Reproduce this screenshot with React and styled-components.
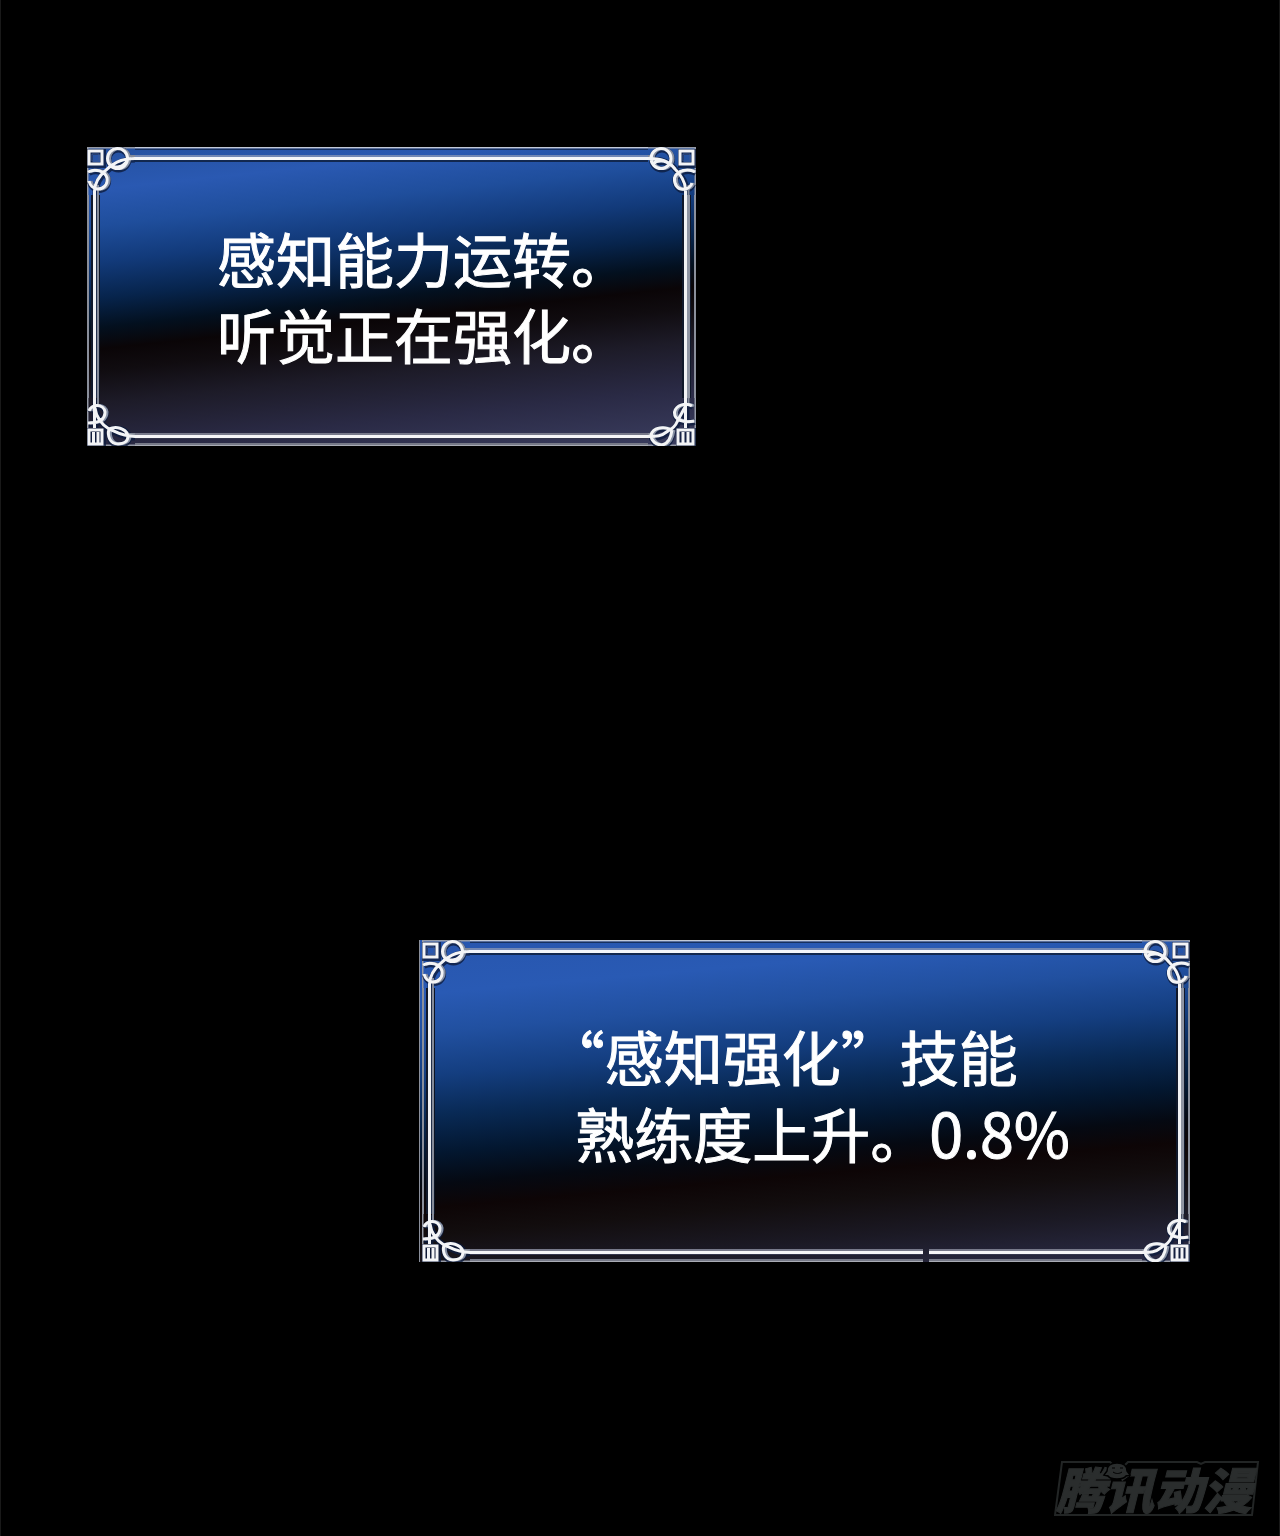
import React from "react";
import styled, { createGlobalStyle, css } from "styled-components";

const GlobalStyle = createGlobalStyle`
  *, *::before, *::after { box-sizing: border-box; }
  body { margin: 0; background: #000; }
`;

const Page = styled.main`
  display: flex;
  flex-direction: column;
  min-height: 100vh;
  padding: 147px 89px 0 86px;
  border: solid #191919;
  border-width: 0 1px;
  background: #000;
  color: #fff;
  font-family: "Noto Sans CJK SC", sans-serif;
`;

const tones = {
  dusk: css`
    background: linear-gradient(
      174deg,
      #24509f 0%, #2a59b2 12%, #1f4e9c 22%, #123a7a 32%, #07244c 42%,
      #03101f 50%, #0a0507 56%, #100c10 62%, #1d1b28 71%, #2a2a45 84%, #3b3e60 100%
    );
  `,
  night: css`
    background: linear-gradient(
      175deg,
      #2856ae 0%, #295ab4 14%, #2150a0 24%, #143e80 35%, #092a56 45%,
      #031730 55%, #050912 63%, #0d0506 69%, #120d0e 76%, #1b1924 86%, #2c2d49 100%
    );
  `,
};

const Panel = styled.section`
  display: grid;
  grid-template-columns: 48px 1fr 48px;
  grid-template-rows: 48px 1fr 48px;
  align-self: ${(p) => p.$side};
  ${(p) => tones[p.$tone]}
  ${(p) => p.$rimmed && css`
    padding-left: 2px;
    border-left: 1px solid #8a8f9b;
  `}
`;

const Message = styled.p`
  grid-area: 1 / 1 / -1 / -1;
  margin: 0;
  padding: ${(p) => p.$pad};
  font-family: "Liberation Sans", "Noto Sans CJK SC", sans-serif;
  font-size: 59px;
  line-height: 76px;
  font-weight: 400;
  white-space: nowrap;
  text-spacing-trim: trim-start;
  -webkit-text-stroke: 1px #fff;
`;

const Line = styled.span`
  display: block;
  height: 76px;
`;

const Quote = styled.span`
  font-family: "Noto Sans CJK SC", sans-serif;
`;

const Figure = styled.span`
  font-family: "Noto Sans CJK SC", sans-serif;
  font-size: 61px;
`;

const TopEdge = styled.div`
  grid-area: 1 / 2;
  height: 16px;
  background: linear-gradient(
    #c3cad8 0 1px, #5a6f9c 1px 2px, #16305f 2px 3px, transparent 3px 8px,
    #7388b4 8px 10px, #f4f6fa 10px 13px, #12284f 13px 15px, transparent 15px
  );
`;

const LeftEdge = styled.div`
  grid-area: 2 / 1;
  width: 15px;
  background: linear-gradient(
    90deg,
    #8a8f9b 0 2px, transparent 2px 4px, #10182a 4px 6px, #f2f3f5 6px 9px,
    #22304c 9px 10px, #858b99 10px 12px, #0c1424 12px 13px, transparent 13px
  );
`;

const RightEdge = styled.div`
  grid-area: 2 / 3;
  justify-self: end;
  width: 15px;
  background: linear-gradient(
    90deg,
    transparent 0 1px, #10182a 1px 3px, #f2f3f5 3px 6px, #8f95a3 6px 9px,
    #10182a 9px 10px, transparent 10px 13px, #8a8f9b 13px 15px
  );
`;

const BottomEdge = styled.div`
  grid-area: 3 / 2;
  align-self: end;
  display: flex;
  gap: 6px;
  height: 14px;
`;

const Rail = styled.div`
  flex: ${(p) => p.$grow};
  background: linear-gradient(
    transparent 0 1px, #77798a 1px 3px, #f6f6f8 3px 6px, #34364c 6px 7px,
    transparent 7px 11px, #777a88 11px 13px, #a9acb5 13px 14px
  );
`;

const CornerSvg = styled.svg`
  grid-area: ${(p) => p.$cell};
  display: block;
  overflow: hidden;
`;

const corners = {
  topLeft: {
    cell: "1 / 1",
    rim: "M48 0.5H0.5V48",
    shade: "M48 9H42 M11 48V38",
    blocks: "M2 4H15V17H2Z",
    pane: "M5 7H12V14H5Z",
    knots: "M20.5 11.5A10 10 0 1 1 40.5 11.5A10 10 0 1 1 20.5 11.5 M1 25C8 21 18 24 20 31C21 38 16 42 11 42C6 42 3 38 2 34",
    thread: "M7.5 48V44C8 36 12 29 18 24C25 17 33 11.5 48 11.5 M24 18C28 22 36 20 40 14",
  },
  topRight: {
    cell: "1 / 3",
    rim: "M0 0.5H47.5V48",
    shade: "M0 9H5 M40.5 48V38",
    blocks: "M32 4H45V17H32Z",
    pane: "M35 7H42V14H35Z",
    knots: "M3 11.5A10 10 0 1 1 23 11.5A10 10 0 1 1 3 11.5 M47 25C40 21 29 23 26.5 31C26 38 30 43 36 42C40 42 43 39 44 36",
    thread: "M37.5 48V42C37 34 32 27 27 22C21 14 13 11.5 0 11.5 M5 17C9 13 18 13 22 18",
  },
  bottomLeft: {
    cell: "3 / 1",
    rim: "M0.5 0V47.5H48",
    shade: "M11 0V8 M48 36H42",
    blocks: "M2 32H15V46H2Z M6.5 34V46 M11 34V46",
    pane: "",
    knots: "M22 31C20 38 23 46 31 46C37 46 41 43 41 38 M2 13C5 5 17 6 18 14C18 21 12 25 1 25",
    thread: "M7.5 0V30 M8 10C9 19 15 27 22 31C28 33 34 38.5 48 38.5 M22 31C29 28 38 30 41 37",
  },
  bottomRight: {
    cell: "3 / 3",
    rim: "M47.5 0V47.5H0",
    shade: "M40.5 0V8 M0 36H5",
    blocks: "M30 32H45V46H30Z M35 34V46 M40 34V46",
    pane: "",
    knots: "M23 32C17 28 5 29 3 37C3 43 8 47 14 47C20 46 23 39 24 32 M44 8C38 4 28 7 26.5 14C26 22 35 25 46 23",
    thread: "M37.5 0V30 M37 9C35 13 31 20 29 24C27 29 24 31 20 33C13 38.5 9 38.5 0 38.5",
  },
};

function Corner({ place }) {
  const c = corners[place];
  const lines = `${c.blocks} ${c.knots} ${c.thread}`;
  return (
    <CornerSvg $cell={c.cell} width="48" height="48" viewBox="0 0 48 48" fill="none" aria-hidden="true">
      <path d={c.rim} stroke="#959aa6" strokeWidth="2" />
      <path d={lines} stroke="#0c1c3d" strokeOpacity="0.8" strokeWidth="6" transform="translate(1 1)" />
      <path d={c.shade} stroke="#858b99" strokeWidth="2" />
      <path d={c.knots} stroke="#8790a3" strokeWidth="3" transform="translate(2 0)" />
      <path d={lines} stroke="#f3f4f6" strokeWidth="3" />
      {c.pane && <path d={c.pane} stroke="#3a5690" strokeWidth="1" />}
    </CornerSvg>
  );
}

function SystemPanel({ side, tone, pad, broken, rimmed, children }) {
  return (
    <Panel $side={side} $tone={tone} $rimmed={rimmed}>
      <TopEdge />
      <LeftEdge />
      <RightEdge />
      <BottomEdge>
        <Rail $grow={68} />
        {broken && <Rail $grow={32} />}
      </BottomEdge>
      {Object.keys(corners).map((place) => (
        <Corner key={place} place={place} />
      ))}
      <Message $pad={pad}>{children}</Message>
    </Panel>
  );
}

const Spacer = styled.div`
  height: 494px;
`;

const Watermark = styled.footer`
  display: grid;
  align-self: flex-end;
  width: 206px;
  margin: auto -70px 19px 0;
  color: #2a2d2d;
`;

const Plate = styled.svg`
  grid-area: 1 / 1;
  display: block;
`;

const Brand = styled.span`
  grid-area: 1 / 1;
  padding-left: 2px;
  font-size: 49px;
  line-height: 54px;
  height: 56px;
  font-weight: 900;
  font-style: italic;
  white-space: nowrap;
  -webkit-text-stroke: 1px #2a2d2d;
`;

export default function App() {
  return (
    <>
      <GlobalStyle />
      <Page lang="zh-CN">
        <SystemPanel side="flex-start" tone="dusk" pad="78px 66px 69px 130px">
          <Line>感知能力运转。</Line>
          <Line>听觉正在强化。</Line>
        </SystemPanel>
        <Spacer />
        <SystemPanel side="flex-end" tone="night" pad="78px 120px 92px 153px" broken rimmed>
          <Line>
            <Quote>“</Quote>感知强化<Quote>”</Quote>技能
          </Line>
          <Line>
            熟练度上升。<Figure>0.8%</Figure>
          </Line>
        </SystemPanel>
        <Watermark>
          <Plate width="206" height="56" viewBox="0 0 206 56" fill="none" aria-hidden="true">
            <path d="M8 1H56L60 5H70L74 1H143L147 3L151 1H204L198 54H1Z" stroke="#222525" strokeWidth="2" />
          </Plate>
          <Brand>腾讯动漫</Brand>
          <Plate width="206" height="56" viewBox="0 0 206 56" fill="none" aria-hidden="true">
            <path d="M53 10C53 4 57 2 63 2C69 2 73 4 73 10L76 14L72 15C69 19 57 19 54 15L50 14Z" fill="#2a2d2d" stroke="#000" strokeWidth="1.5" />
            <path d="M58 7H61M66 7H69M59 11C62 13 65 13 68 11" stroke="#000" />
          </Plate>
        </Watermark>
      </Page>
    </>
  );
}
